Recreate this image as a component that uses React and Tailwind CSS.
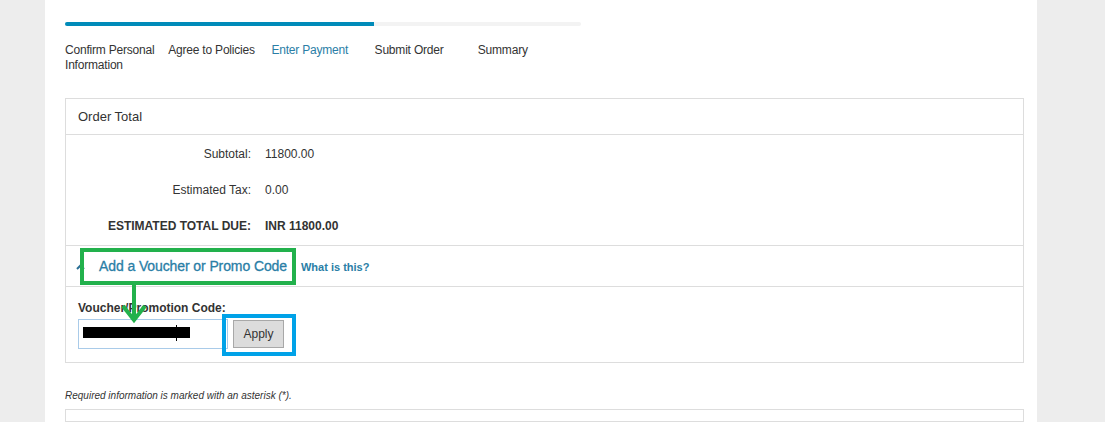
import React from "react";

const steps = [
  { label: "Confirm Personal Information", active: false },
  { label: "Agree to Policies", active: false },
  { label: "Enter Payment", active: true },
  { label: "Submit Order", active: false },
  { label: "Summary", active: false },
];

const totals = [
  { label: "Subtotal:", value: "11800.00" },
  { label: "Estimated Tax:", value: "0.00" },
  { label: "ESTIMATED TOTAL DUE:", value: "INR 11800.00", strong: true },
];

export default function App() {
  return (
    <div className="flex h-[422px] w-[1105px] overflow-hidden bg-[#ededed] font-['Liberation_Sans',Arial,sans-serif] text-[#333]">
      <div className="w-[45px] shrink-0" />

      <main className="flex w-[992px] shrink-0 flex-col bg-white pl-[20px] pr-[13px] pt-[22px]">
        {/* Progress */}
        <div className="flex h-[16px] w-[516px] overflow-hidden rounded-[2px] bg-[#f3f3f3]">
          <div className="h-full w-[309px] bg-[#008bb9]" />
        </div>
        <div className="mt-[17px] grid w-[516px] grid-cols-5 text-[12px] leading-[15px] tracking-[-0.2px]">
          {steps.map((s) => (
            <div key={s.label} className={s.active ? "text-[#2a7ea6]" : "text-[#333]"}>
              {s.label}
            </div>
          ))}
        </div>

        {/* Order Total panel */}
        <section className="relative mt-[25px] w-[959px] border border-[#dddddd]">
          <header className="flex h-[36px] items-center border-b border-[#dddddd] px-[12px] text-[13px] text-[#333]">
            Order Total
          </header>

          <div className="border-b border-[#dddddd] pt-px pb-px">
            {totals.map((t) => (
              <div key={t.label} className="flex h-[36px] items-center text-[12px]">
                <div className={`w-[185px] text-right ${t.strong ? "font-bold" : ""}`}>{t.label}</div>
                <div className={`ml-[14px] ${t.strong ? "font-bold" : ""}`}>{t.value}</div>
              </div>
            ))}
          </div>

          <div className="flex h-[41px] items-center border-b border-[#dddddd] pl-[10px]">
            <svg width="9" height="6" viewBox="0 0 9 6" className="mt-[1px]">
              <path d="M1 5 L4.5 1.5 L8 5" fill="none" stroke="#2a6f95" strokeWidth="2" />
            </svg>
            <span className="ml-[14px] text-[14px] tracking-[-0.1px] text-[#2a7ea6] [-webkit-text-stroke:0.3px_#2a7ea6]">Add a Voucher or Promo Code</span>
            <span className="ml-[14px] mt-[2px] text-[11px] font-bold text-[#2a7ea6]">What is this?</span>
          </div>

          <div className="px-[12px] pb-[13px] pt-[14px]">
            <div className="text-[12px] font-bold leading-[14px]">Voucher/Promotion Code:</div>
            <div className="mt-[4px] flex items-center">
              <div className="relative h-[30px] w-[150px] border border-[#a9cbe9] bg-white">
                <div className="absolute left-[4px] top-[7px] h-[11px] w-[107px] bg-black" />
                <div className="absolute left-[97px] top-[5px] h-[16px] w-px bg-black" />
              </div>
              <button className="ml-[5px] h-[28px] w-[51px] border border-[#a8a8a8] bg-[#dcdcdc] text-[12px] text-[#333]">
                Apply
              </button>
            </div>
          </div>

          {/* annotations */}
          <div className="pointer-events-none absolute left-[14px] top-[149px] h-[37px] w-[216px] border-[4px] border-[#22b14c]" />
          <svg className="pointer-events-none absolute left-[54px] top-[186px]" width="28" height="39" viewBox="0 0 28 39">
            <path d="M14 0 V34" stroke="#22b14c" strokeWidth="4" />
            <path d="M3 21 L14 35 L25 21" fill="none" stroke="#22b14c" strokeWidth="4" />
          </svg>
          <div className="pointer-events-none absolute left-[156px] top-[215px] h-[42px] w-[74px] border-[4px] border-[#00a2e8]" />
        </section>

        <p className="mt-[25px] text-[10px] italic text-[#333]">Required information is marked with an asterisk (*).</p>

        <section className="mt-[6px] h-[40px] w-[959px] border border-[#dddddd]" />
      </main>

      <div className="flex-1" />
    </div>
  );
}
